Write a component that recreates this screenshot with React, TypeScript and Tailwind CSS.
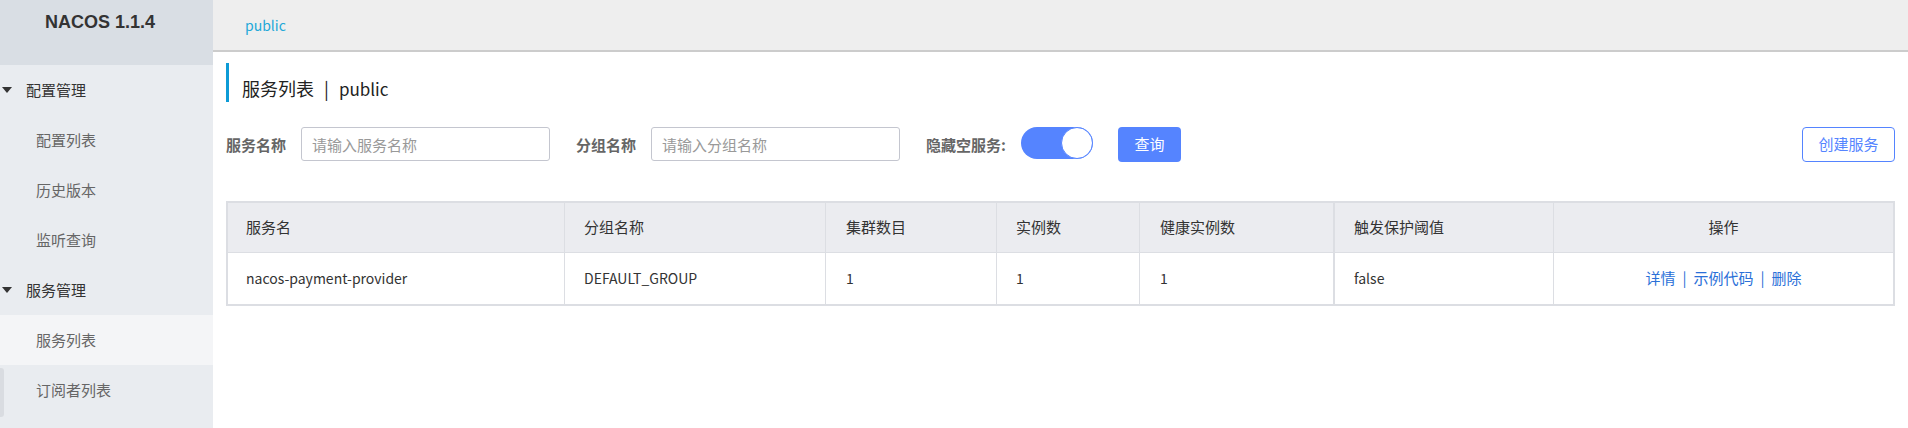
import React from "react";

function Caret() {
  return (
    <svg width="10" height="6" viewBox="0 0 10 6" className="shrink-0">
      <polygon points="0,0 10,0 5,6" fill="#333" />
    </svg>
  );
}

function Group({ title }: { title: string }) {
  return (
    <div className="h-[50px] flex items-center pl-[2px] text-[#333]">
      <Caret />
      <span className="ml-[14px]">{title}</span>
    </div>
  );
}

function Item({ label, active, strip }: { label: string; active?: boolean; strip?: boolean }) {
  return (
    <div
      className={
        "relative h-[50px] flex items-center pl-[36px] text-[#666] " +
        (active ? "bg-[#f4f5f7]" : "")
      }
    >
      {strip && (
        <div className="absolute left-0 top-[3px] h-[49px] w-[4px] rounded-r-[3px] bg-[#d9dce1]" />
      )}
      {label}
    </div>
  );
}

const cols = "grid grid-cols-[337px_261px_171px_143px_195px_219px_1fr]";

export default function App() {
  return (
    <div className="flex min-h-screen w-full font-['Noto_Sans_CJK_SC',sans-serif] text-[15px] text-[#333] bg-white">
      <aside className="w-[213px] shrink-0 bg-[#e9ecf0] flex flex-col">
        <div className="h-[65px] bg-[#d9dee4] pt-[10px] pl-[45px]">
          <span className="font-['Liberation_Sans',Arial,sans-serif] font-bold text-[18px] leading-[24px] text-[#333]">
            NACOS 1.1.4
          </span>
        </div>
        <Group title="配置管理" />
        <Item label="配置列表" />
        <Item label="历史版本" />
        <Item label="监听查询" />
        <Group title="服务管理" />
        <Item label="服务列表" active />
        <Item label="订阅者列表" strip />
      </aside>

      <main className="flex-1 flex flex-col min-w-0">
        <div className="h-[52px] bg-[#eeeeee] border-b-2 border-[#cccccc] flex items-center pl-[32px] text-[14px] text-[#22a8d8]">
          public
        </div>

        <div className="px-[13px]">
          <div className="mt-[11px] h-[39px] border-l-[3px] border-[#0d9bd6] pl-[13px] pt-[11px] text-[18px] leading-[28px] text-[#222]">
            服务列表<span className="mx-[10px]">|</span><span className="text-[17px]">public</span>
          </div>

          <div className="mt-[25px] flex items-start h-[35px]">
            <span className="font-bold text-[#666] leading-[35px]">服务名称</span>
            <input
              className="ml-[15px] w-[249px] h-[34px] border border-[#c4c6cf] rounded-[3px] px-[10px] outline-none placeholder:text-[#999] text-[15px]"
              placeholder="请输入服务名称"
            />
            <span className="ml-[26px] font-bold text-[#666] leading-[35px]">分组名称</span>
            <input
              className="ml-[15px] w-[249px] h-[34px] border border-[#c4c6cf] rounded-[3px] px-[10px] outline-none placeholder:text-[#999] text-[15px]"
              placeholder="请输入分组名称"
            />
            <span className="ml-[26px] font-bold text-[#666] leading-[35px]">隐藏空服务:</span>
            <div className="ml-[15px] w-[72px] h-[32px] rounded-full bg-[#5584ff] flex justify-end">
              <div className="w-[32px] h-[32px] rounded-full bg-white border border-[#5584ff]" />
            </div>
            <button className="ml-[25px] w-[63px] h-[35px] rounded-[4px] bg-[#5584ff] text-white text-[15px]">
              查询
            </button>
            <button className="ml-auto w-[93px] h-[35px] rounded-[4px] border border-[#5584ff] bg-white text-[#5584ff] text-[15px]">
              创建服务
            </button>
          </div>

          <div className="mt-[39px] border-2 border-[#dcdee3]">
            <div className={cols + " h-[50px] bg-[#ebecf0] border-b border-[#dcdee3]"}>
              <div className="flex items-center pl-[18px] border-r border-[#dcdee3]">服务名</div>
              <div className="flex items-center pl-[19px] border-r border-[#dcdee3]">分组名称</div>
              <div className="flex items-center pl-[20px] border-r border-[#dcdee3]">集群数目</div>
              <div className="flex items-center pl-[19px] border-r border-[#dcdee3]">实例数</div>
              <div className="flex items-center pl-[20px] border-r-2 border-[#dcdee3]">健康实例数</div>
              <div className="flex items-center pl-[19px] border-r border-[#dcdee3]">触发保护阈值</div>
              <div className="flex items-center justify-center">操作</div>
            </div>
            <div className={cols + " h-[51px] bg-white text-[14px]"}>
              <div className="flex items-center pl-[18px] border-r border-[#dcdee3]">nacos-payment-provider</div>
              <div className="flex items-center pl-[19px] border-r border-[#dcdee3]">DEFAULT_GROUP</div>
              <div className="flex items-center pl-[20px] border-r border-[#dcdee3]">1</div>
              <div className="flex items-center pl-[19px] border-r border-[#dcdee3]">1</div>
              <div className="flex items-center pl-[20px] border-r-2 border-[#dcdee3]">1</div>
              <div className="flex items-center pl-[19px] border-r border-[#dcdee3]">false</div>
              <div className="flex items-center justify-center text-[15px] text-[#2a70d8]">
                <span>详情</span>
                <span className="mx-[7px]">|</span>
                <span>示例代码</span>
                <span className="mx-[7px]">|</span>
                <span>删除</span>
              </div>
            </div>
          </div>
        </div>
      </main>
    </div>
  );
}
